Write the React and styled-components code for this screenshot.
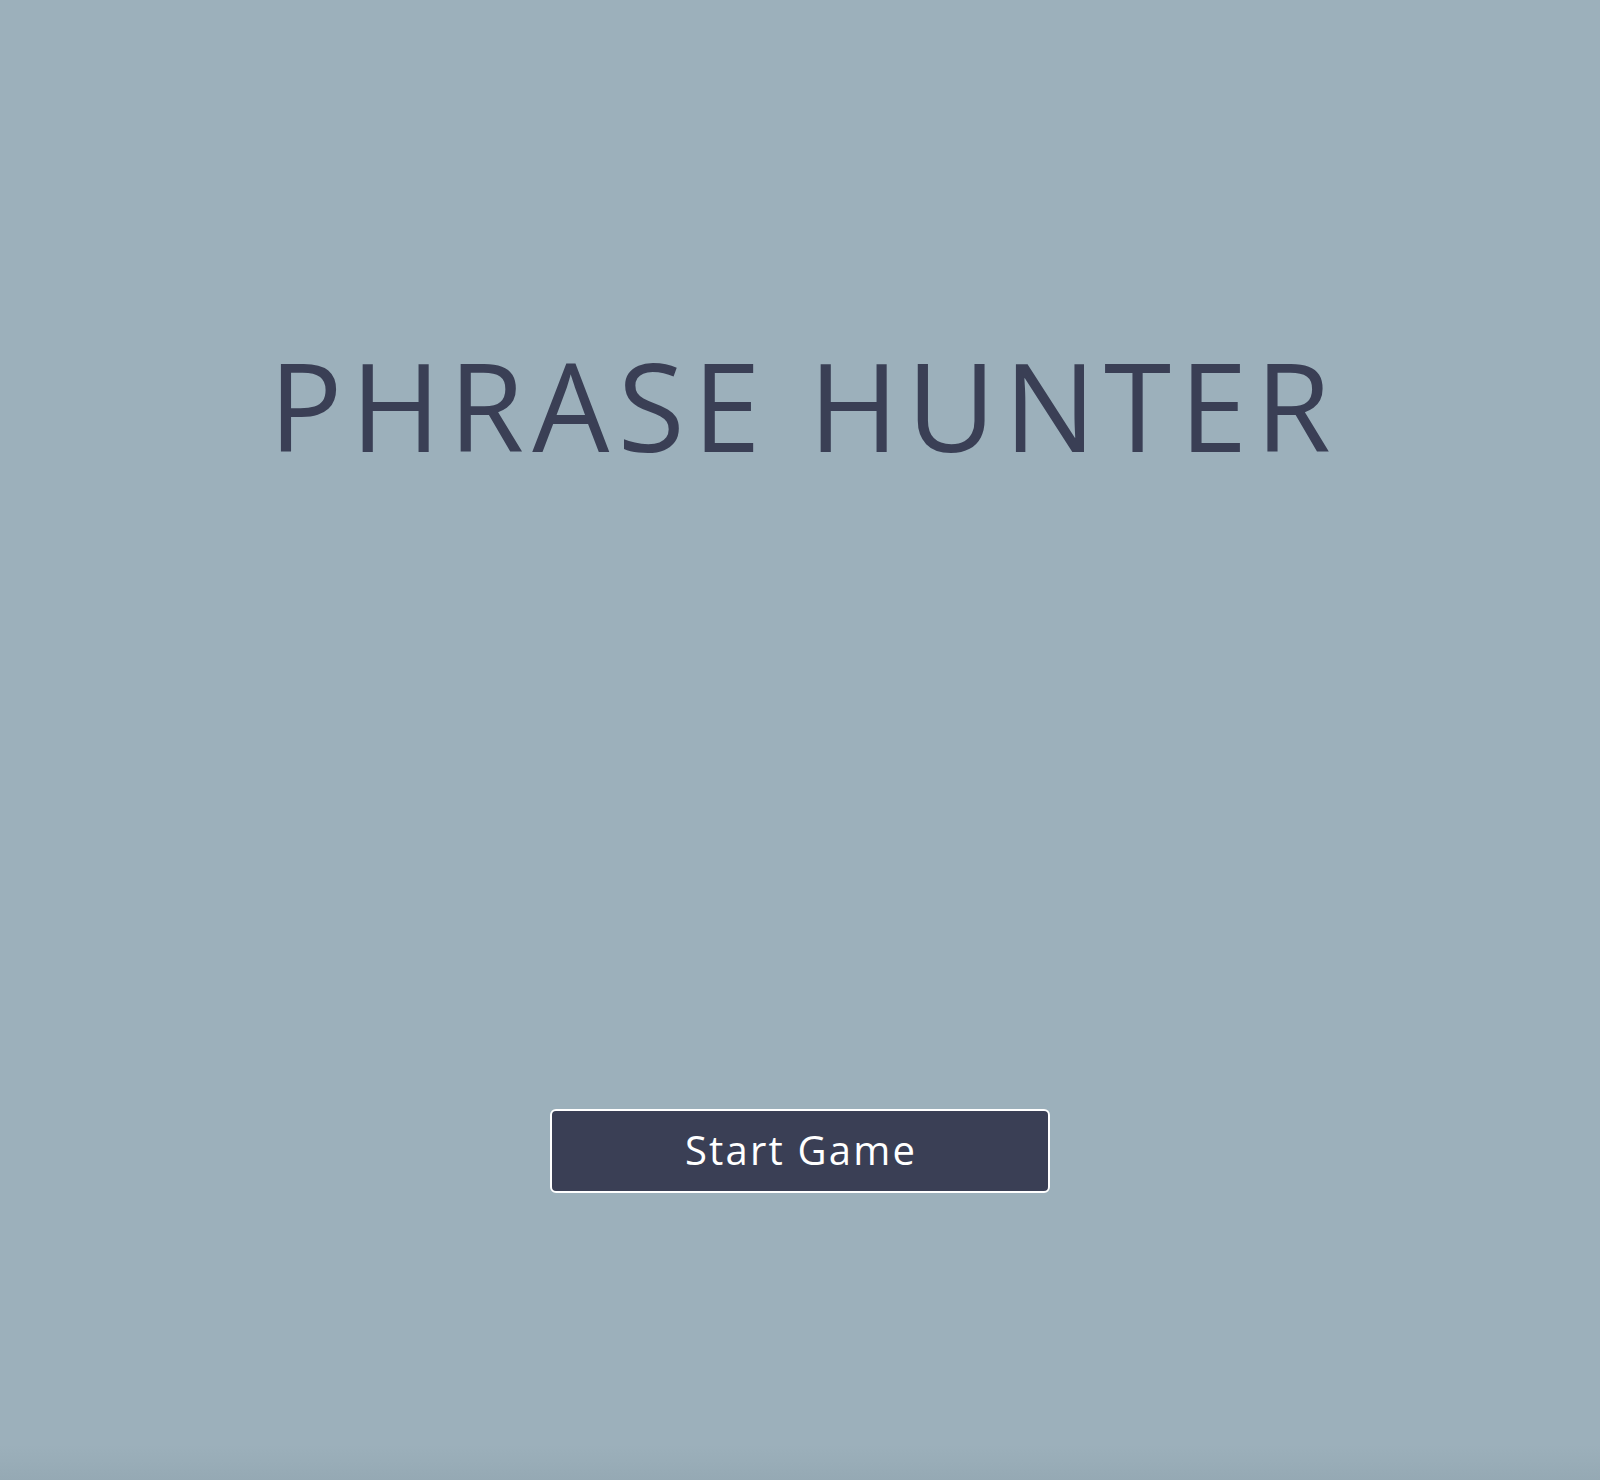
import React from "react";
import styled, { createGlobalStyle } from "styled-components";

const Global = createGlobalStyle`
  html, body { margin: 0; padding: 0; }
  body {
    background: #9cb0bb;
    font-family: "Open Sans", "Noto Sans", sans-serif;
  }
`;

const Overlay = styled.main`
  box-sizing: border-box;
  height: 1480px;
  display: flex;
  flex-direction: column;
  align-items: center;
  padding-top: 344px;
  background: linear-gradient(to bottom, #9cb0bb 0, #9cb0bb 1445px, #95a9b4 1480px);
`;

const Title = styled.h1`
  margin: 0;
  padding-left: 8px;
  font-family: "Open Sans", "Noto Sans", sans-serif;
  font-weight: 400;
  font-size: 122px;
  line-height: 1;
  letter-spacing: 8.2px;
  color: #3a3f55;
  white-space: nowrap;
`;

const StartButton = styled.button`
  margin-top: 643px;
  width: 500px;
  height: 84px;
  padding: 0 0 4px 2px;
  background: #3a3f55;
  color: #ffffff;
  border: 2px solid #ffffff;
  border-radius: 6px;
  font-family: "Open Sans", "Noto Sans", sans-serif;
  font-size: 40px;
  letter-spacing: 2.2px;
  cursor: pointer;
`;

export default function App() {
  return (
    <>
      <Global />
      <Overlay>
        <Title>PHRASE HUNTER</Title>
        <StartButton>Start Game</StartButton>
      </Overlay>
    </>
  );
}
